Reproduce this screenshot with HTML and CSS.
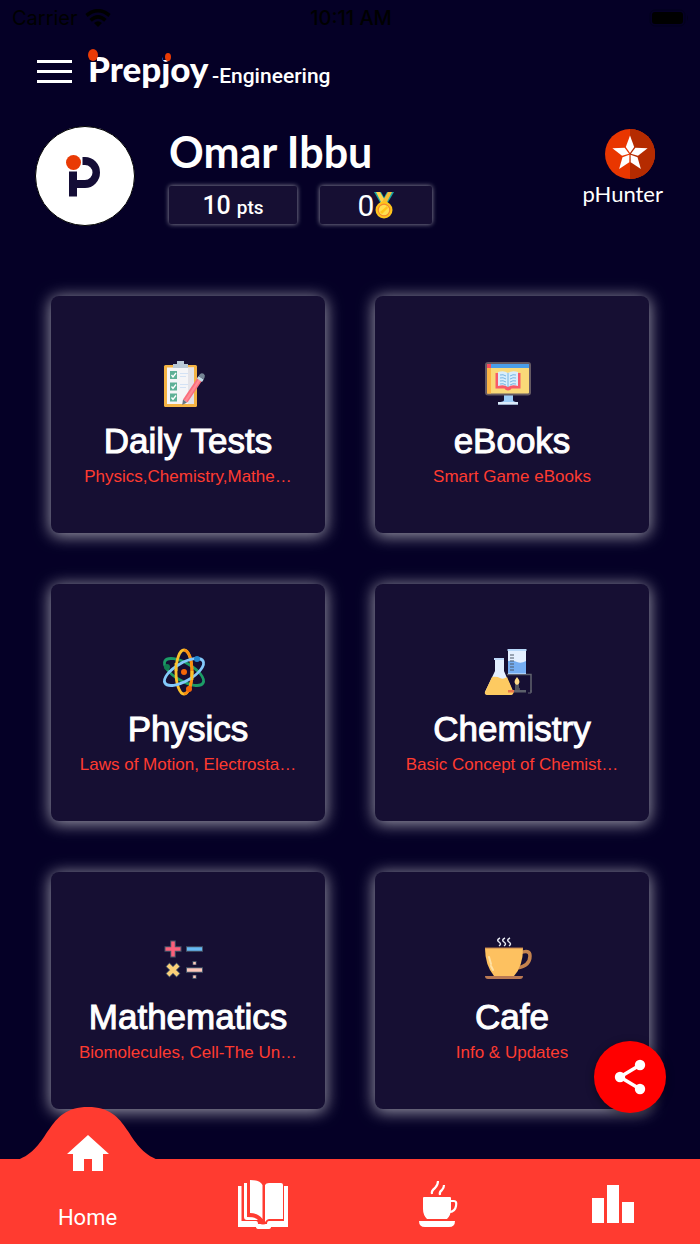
FILE: index.html
```
<!DOCTYPE html>
<html lang="en">
<head>
    <meta charset="UTF-8">
    <meta name="viewport" content="width=device-width, initial-scale=1">
    <title>Prepjoy - Engineering</title>
    <link rel="stylesheet" href="styles.css">
</head>
<body>
<div class="root">

    <div class="status-bar">
        <div class="carrier">
            <span>Carrier</span>
            <svg width="26" height="18" viewBox="0 0 26 18">
                <g fill="none" stroke="#000" stroke-width="3.6">
                    <path d="M1.500 6.500Q13-3 24.500 6.500"/>
                    <path d="M5.600 11.300Q13 4.500 20.400 11.300"/>
                </g>
                <path d="M13 18l-4-4q4-3.400 8 0z"/>
            </svg>
        </div>
        <div class="time">10:11 AM</div>
        <div class="battery">
            <svg width="41" height="18" viewBox="0 0 41 18">
                <rect x="1" y="1" width="35" height="16" rx="5" fill="none" stroke="#03001c"/>
                <rect x="3" y="3" width="31" height="12" rx="3"/>
                <path d="M38 6q2 3 0 6z" fill="#03001c"/>
            </svg>
        </div>
    </div>

    <header class="header">
        <button type="button" class="menu-btn" aria-label="Menu">
            <span></span><span></span><span></span>
        </button>
        <div class="brand">
            <svg width="250" height="48" viewBox="0 0 250 48">
                <text class="brand-name" x="0" y="35">Prepjoy</text>
                <text class="brand-sub" x="124" y="36">-Engineering</text>
                <path d="M0 0h9v15H0z" fill="#050026"/>
                <ellipse cx="5" cy="8" rx="5" ry="6" fill="#e93a05"/>
                <path d="M75 3h11v10H75z" fill="#050026"/>
                <ellipse cx="80" cy="10" rx="3" ry="4" fill="#e93a05"/>
            </svg>
        </div>
    </header>

    <section class="profile">
        <div class="avatar">
            <svg width="38" height="46" viewBox="0 0 38 46">
                <path d="M18.500 4H21a15 15.500 0 0 1 0 31h-8v8.500H5V18.500h8V27h8a7.500 7.500 0 0 0 0-15h-2.500z" fill="#140d36"/>
                <circle cx="9.500" cy="9.500" r="8.500" fill="#fff"/>
                <circle cx="9.500" cy="9.500" r="7.500" fill="#e93a05"/>
            </svg>
        </div>
        <div class="user">
            <h1 class="user-name">Omar Ibbu</h1>
            <div class="scores">
                <div class="score score-points">10 <small>pts</small></div>
                <div class="score score-medals">0<svg width="20" height="27" viewBox="0 0 20 27">
                        <path d="M0 0h7l5 9-5 3z" fill="#18a7a5"/>
                        <path d="M20 0h-7l-5 9 5 3z" fill="#18a7a5"/>
                        <path d="M2 0h4l6 10-4 2z" fill="#ffd34d"/>
                        <path d="M18 0h-4L8 10l4 2z" fill="#f5bd35"/>
                        <circle cx="10" cy="18" r="8.500" fill="#ffc51b"/>
                        <circle cx="10" cy="18" r="5.800" fill="#ffdf50" stroke="#f48a2c" stroke-width="1.200"/>
                        <path d="M6 20l7-6 1 2-6 6z" fill="#ffc51b"/>
                    </svg></div>
            </div>
        </div>
        <div class="rank">
            <svg width="52" height="52" viewBox="0 0 52 52">
                <circle cx="26" cy="26" r="25" fill="#e93600"/>
                <path d="M26 1a25 25 0 0 1 0 50z" fill="#b52b00"/>
                <g fill="#fff">
                    <path id="petal" d="M26 7.500L30.200 19 26 25l-4.200-6z"/>
                    <use href="#petal" transform="rotate(72 26 26)"/>
                    <use href="#petal" transform="rotate(144 26 26)"/>
                    <use href="#petal" transform="rotate(216 26 26)"/>
                    <use href="#petal" transform="rotate(288 26 26)"/>
                </g>
            </svg>
            <span>pHunter</span>
        </div>
    </section>

    <main class="cards">
        <a href="#" class="card">
            <svg width="48" height="48" viewBox="0 0 48 48">
                <rect x="4" y="5" width="33" height="42" rx="1.500" fill="#f4b344"/>
                <path d="M7 7.500h27V44H7z" fill="#f5f5f7"/>
                <path d="M28 7.500h6V44h-6z" fill="#e3e3e8"/>
                <path d="M13 7V4h4V1h7v3h4v4H13z" fill="#b9c9d6"/>
                <path d="M20 13.500h8M20 16.500h6M20 24.500h8M20 27.500h6" stroke="#d3e2f5"/>
                <path d="M10 11h7v8h-7zM10 22.500h7v8h-7zM10 33.500h7v8h-7z" fill="#5fb096"/>
                <path d="M11.500 15l1.500 2 3-4M11.500 26.500l1.500 2 3-4M11.500 37.500l1.500 2 3-4" fill="none" stroke="#fff" stroke-width="1.300"/>
                <path d="M38 17l4.500 3L27.500 42.500l-4.500-3z" fill="#fa6e7d"/>
                <path d="M39.500 18l1.800 1.200L26.500 41.500l-2-1z" fill="#ff8c95"/>
                <path d="M37 18.500l1.700-2.500 5 3.400-1.700 2.500z" fill="#c3dce8"/>
                <path d="M38.700 16l1-1.600q2-2.200 4-.6t.8 4l-1 1.600z" fill="#758595"/>
                <path d="M23 39.500l4 3L22.200 45z" fill="#697783"/>
            </svg>
            <h2>Daily Tests</h2>
            <p>Physics,Chemistry,Mathe…</p>
        </a>
        <a href="#" class="card">
            <svg width="48" height="48" viewBox="0 0 48 48">
                <path d="M20 34h9v6q0 2 5 2v2.500H14V42q6 0 6-2z" fill="#9dcdf8"/>
                <path d="M14 42h20v2.500H14z" fill="#dcebfb"/>
                <rect x="2" y="3" width="44" height="31.500" rx="2" fill="#f9d978" stroke="#655a63" stroke-width="2"/>
                <path d="M3 4h4v29.500H3z" fill="#fbb545"/>
                <path d="M3 4h42v4H3z" fill="#4a9de8"/>
                <path d="M3 4h4v4H3z" fill="#f64c5d"/>
                <path d="M11.500 13h25v15.500h-9q-1 2-3.500 2t-3.500-2h-9z" fill="#f85a69"/>
                <path d="M14 12q6-2 10 1 4-3 10-1v14q-6-2-10 1-4-3-10-1z" fill="#d8edfb"/>
                <path d="M16 15q3-1 6 1M16 18q3-1 6 1M16 21q3-1 6 1M16 24q3-1 6 1M26 16q3-2 6-1M26 19q3-2 6-1M26 22q3-2 6-1M26 25q3-2 6-1M24 13v14" fill="none" stroke="#77b6e3"/>
            </svg>
            <h2>eBooks</h2>
            <p>Smart Game eBooks</p>
        </a>
        <a href="#" class="card">
            <svg width="48" height="48" viewBox="0 0 48 48">
                <g fill="none" stroke-width="2.800">
                    <ellipse cx="24" cy="24" rx="22" ry="9" transform="rotate(30 24 24)" stroke="#1c9c66"/>
                    <ellipse cx="24" cy="24" rx="8" ry="22" stroke="#fbc02b"/>
                    <path d="M24 2q8 2 8 22t-8 22" stroke="#fb8e10"/>
                    <ellipse cx="24" cy="24" rx="22" ry="9" transform="rotate(-30 24 24)" stroke="#83c9fb"/>
                    <path d="M16 15v8M32 23v9" stroke="#fbc02b"/>
                </g>
                <circle cx="24" cy="24" r="3" fill="#f46608"/>
                <circle cx="7" cy="19" r="3" fill="#117c50"/>
                <circle cx="37" cy="11" r="3" fill="#2388cf"/>
                <circle cx="29" cy="41" r="3" fill="#f46608"/>
            </svg>
            <h2>Physics</h2>
            <p>Laws of Motion, Electrosta…</p>
        </a>
        <a href="#" class="card">
            <svg width="48" height="48" viewBox="0 0 48 48">
                <path d="M23 26.500h24v18M35 44v-4" fill="none" stroke="#60636e" stroke-width="1.500"/>
                <path d="M44 45h3v-3" fill="none" stroke="#60636e"/>
                <path d="M24 2h18v24H24z" fill="#e5f0ff"/>
                <path d="M24 13q5-1 9 1t9-1v12.500H24z" fill="#75aef3"/>
                <path d="M23.500 2h19" stroke="#b8d8f9" stroke-width="2"/>
                <path d="M26 7h4M26 10h4M26 13h4M26 16h4M26 19h4M26 22h4" stroke="#4f5969" stroke-width="1.200"/>
                <path d="M31 36h4v7h-4z" fill="#51545c"/>
                <path d="M33 29q5 6 0 8-5-2 0-8z" fill="#ffdc87"/>
                <path d="M24 42h18v2.500H24z" fill="#5c606b"/>
                <path d="M11 11h9v12l9 21q0 3-3 3H4q-3 0-3-3l10-21z" fill="#e4efff"/>
                <path d="M8 29q5-1 8 1t7-1l6.500 15q0 3-3 3H4q-4 0-3-3z" fill="#fdca61"/>
                <path d="M10 11h10" stroke="#c0dafa" stroke-width="2"/>
                <path d="M24 42h6v2.500h-6z" fill="#e6764b"/>
            </svg>
            <h2>Chemistry</h2>
            <p>Basic Concept of Chemist…</p>
        </a>
        <a href="#" class="card">
            <svg width="48" height="48" viewBox="0 0 48 48">
                <g fill="none" stroke="#46566a" stroke-width="5.500">
                    <path d="M13 4.500v17M4.500 13h17M26 13h17M26 34h17M7.500 28.500l11 11M18.500 28.500l-11 11"/>
                    <path d="M34.500 25v4M34.500 39v4" stroke-width="4"/>
                </g>
                <g fill="none" stroke-width="3.500">
                    <path d="M13 5.500v15M5.500 13h15" stroke="#fb607b"/>
                    <path d="M27 13h15" stroke="#66baf4"/>
                    <path d="M8 29l10 10M18 29L8 39" stroke="#fbd078" stroke-width="4"/>
                    <path d="M27 34h15" stroke="#fdc9bb"/>
                    <path d="M34.500 26v2.500M34.500 39.500V42" stroke="#fdc9bb" stroke-width="2.500"/>
                </g>
            </svg>
            <h2>Mathematics</h2>
            <p>Biomolecules, Cell-The Un…</p>
        </a>
        <a href="#" class="card">
            <svg width="48" height="48" viewBox="0 0 48 48">
                <path d="M36 17q10-4 10 3 0 10-13 12" fill="none" stroke="#c4834e" stroke-width="3.500"/>
                <path d="M1 12h38q0 18-9 28H10Q1 29 1 12z" fill="#fdc160"/>
                <path d="M1 12h38" stroke="#bd7e4d" stroke-width="1.200"/>
                <path d="M5 21l2 7M7 30l2 4" stroke="#fee1a4" stroke-width="2" stroke-linecap="round"/>
                <path d="M1 40h38q0 3-3 3H4q-3 0-3-3z" fill="#b97953"/>
                <path d="M16 2q-4 2-1 4t0 4M21 2q-4 2-1 4t0 4M26 2q-4 2-1 4t0 4" fill="none" stroke="#e4e6ef" stroke-width="1.500"/>
            </svg>
            <h2>Cafe</h2>
            <p>Info &amp; Updates</p>
        </a>
    </main>

    <button type="button" class="share-btn" aria-label="Share">
        <svg width="34" height="36" viewBox="0 0 34 36">
            <path d="M27 6L7 18l20 12" fill="none" stroke="#fff" stroke-width="3.500"/>
            <g fill="#fff">
                <circle cx="27" cy="6" r="5.200"/>
                <circle cx="7" cy="18" r="5.200"/>
                <circle cx="27" cy="30" r="5.200"/>
            </g>
        </svg>
    </button>

    <nav class="tabs">
        <a href="#" class="tab active">
            <svg class="bump" width="142" height="65" viewBox="0 0 142 65">
                <path d="M0 53C34 42 28 0 71 0s37 42 71 53z" fill="#ff3b30"/>
                <path d="M71 28l21 19h-6v17H75V52h-8v12H56V47h-6z" fill="#fff"/>
            </svg>
            <span>Home</span>
        </a>
        <a href="#" class="tab" aria-label="Books">
            <svg width="52" height="50" viewBox="0 0 52 50">
                <path d="M1 7h3.500v35H19q2 0 2 3h9q0-3 2-3h15V7h4v41H34q0 2-3 2h-9q-3 0-3-2H1z" fill="#fff"/>
                <path d="M7 4h3v34q9 0 11 3H10q-3 0-3-3z" fill="#fff"/>
                <path d="M22 40h8v4q-4 3-8 0z" fill="#ff3b30"/>
                <path d="M13 1q10 0 12.500 5v34q-4-6-12.500-6z" fill="#fff"/>
                <path d="M28 6q1-2 4-2h12q2 0 2 2v34H32q-2 0-4 3z" fill="#fff"/>
            </svg>
        </a>
        <a href="#" class="tab" aria-label="Cafe">
            <svg width="40" height="50" viewBox="0 0 40 50">
                <path d="M14 15q-1-3 3-6 3-3 3-7M22 16q-1-3 2-5 2-2 2-5" fill="none" stroke="#fff" stroke-width="2.200"/>
                <path d="M32 22h4q3 0 2 5-1 6-7 6" fill="none" stroke="#fff" stroke-width="2.200"/>
                <path d="M5 19q0-1 1-1h26q1 0 1 1v11q0 6-4 10H9q-4-4-4-10zM1 42h36q0 6-6 6H7q-6 0-6-6z" fill="#fff"/>
            </svg>
        </a>
        <a href="#" class="tab" aria-label="Leaderboard">
            <svg width="44" height="40" viewBox="0 0 44 40">
                <path d="M1 14h12v25H1zM16 1h12v38H16zM31 18h12v21H31z" fill="#fff"/>
            </svg>
        </a>
    </nav>

</div>
</body>
</html>
```

FILE: styles.css
```
* {
    box-sizing: border-box;
}

body {
    margin: 0;
    font-family: "Liberation Sans", Arial, sans-serif;
    color: #fff;
    background: #050026;
}

h1, h2, p {
    margin: 0;
    font-weight: normal;
}

a {
    color: inherit;
    text-decoration: none;
}

button {
    padding: 0;
    border: none;
    cursor: pointer;
}

svg {
    display: block;
}

.root {
    display: flex;
    flex-direction: column;
    min-height: 100vh;
}

/* status bar */
.status-bar {
    display: grid;
    grid-template-columns: 1fr auto 1fr;
    align-items: center;
    height: 36px;
    padding: 0 10px 0 12px;
    font-family: Inter, sans-serif;
    font-size: 20px;
    color: #000;
}

.carrier {
    display: flex;
    align-items: center;
    gap: 7px;
}

.time {
    font-weight: 500;
}

.battery {
    justify-self: end;
}

/* header */
.header {
    display: flex;
    align-items: center;
    height: 70px;
    padding: 0 37px;
    gap: 16px;
}

.menu-btn {
    display: flex;
    flex-direction: column;
    gap: 7px;
    width: 35px;
    background: none;
}

.menu-btn span {
    height: 3px;
    background: #fff;
}

.brand-name {
    font-family: Lato, sans-serif;
    font-size: 35px;
    font-weight: 900;
    fill: #fff;
}

.brand-sub {
    font-family: Roboto, sans-serif;
    font-size: 21px;
    font-weight: 500;
    fill: #fff;
}

/* profile */
.profile {
    display: flex;
    align-items: flex-start;
    padding: 20px 37px 0 35px;
    font-family: Lato, sans-serif;
}

.avatar {
    display: flex;
    align-items: center;
    justify-content: center;
    width: 100px;
    height: 100px;
    padding-right: 4px;
    border: 1px solid #000;
    border-radius: 50%;
    background: #fff;
}

.user {
    flex: 1;
    padding-left: 34px;
}

.user-name {
    font-size: 43px;
    font-weight: 700;
    line-height: 52px;
}

.scores {
    display: flex;
    gap: 23px;
    margin-top: 8px;
}

.score {
    display: flex;
    align-items: center;
    justify-content: center;
    height: 38px;
    font-family: Roboto, sans-serif;
    background: #160f33;
    border-radius: 2px;
    box-shadow: 0 0 5px rgba(255, 255, 255, 0.6);
}

.score-points {
    align-items: baseline;
    gap: 6px;
    width: 128px;
    font-size: 25px;
    font-weight: 500;
    line-height: 39px;
}

.score-points small {
    font-size: 19px;
}

.score-medals {
    width: 112px;
    font-size: 30px;
}

.rank {
    display: flex;
    flex-direction: column;
    align-items: center;
    padding-top: 2px;
    font-size: 22px;
    line-height: 28px;
}

.rank svg {
    margin-left: 14px;
}

/* cards */
.cards {
    display: grid;
    grid-template-columns: 1fr 1fr;
    gap: 51px 50px;
    padding: 70px 51px 50px;
}

.card {
    display: flex;
    flex-direction: column;
    align-items: center;
    min-width: 0;
    height: 237px;
    padding: 64px 20px 0;
    background: #160f33;
    border-radius: 8px;
    box-shadow: 0 2px 16px 1px rgba(255, 255, 255, 0.6);
}

.card svg {
    margin-right: 9px;
}

.card h2 {
    margin-top: 13px;
    font-size: 35px;
    line-height: 40px;
    -webkit-text-stroke: 1px #fff;
}

.card p {
    max-width: 100%;
    margin-top: 5px;
    overflow: hidden;
    font-size: 17px;
    line-height: 22px;
    color: #ff3b30;
    text-overflow: ellipsis;
    white-space: nowrap;
}

/* floating share button */
.share-btn {
    position: fixed;
    right: 34px;
    bottom: 131px;
    display: flex;
    align-items: center;
    justify-content: center;
    width: 72px;
    height: 72px;
    background: #f00;
    border-radius: 50%;
    box-shadow: 0 2px 8px rgba(0, 0, 0, 0.4);
}

/* bottom tabs */
.tabs {
    display: grid;
    grid-template-columns: repeat(4, 1fr);
    height: 85px;
    margin-top: auto;
    background: #ff3b30;
}

.tab {
    position: relative;
    display: flex;
    align-items: center;
    justify-content: center;
    padding-top: 4px;
}

.tab.active {
    align-items: flex-end;
    padding-bottom: 12px;
    font-family: Roboto, sans-serif;
    font-size: 22px;
    line-height: 28px;
}

.bump {
    position: absolute;
    top: -52px;
    left: 50%;
    transform: translateX(-50%);
}
```
